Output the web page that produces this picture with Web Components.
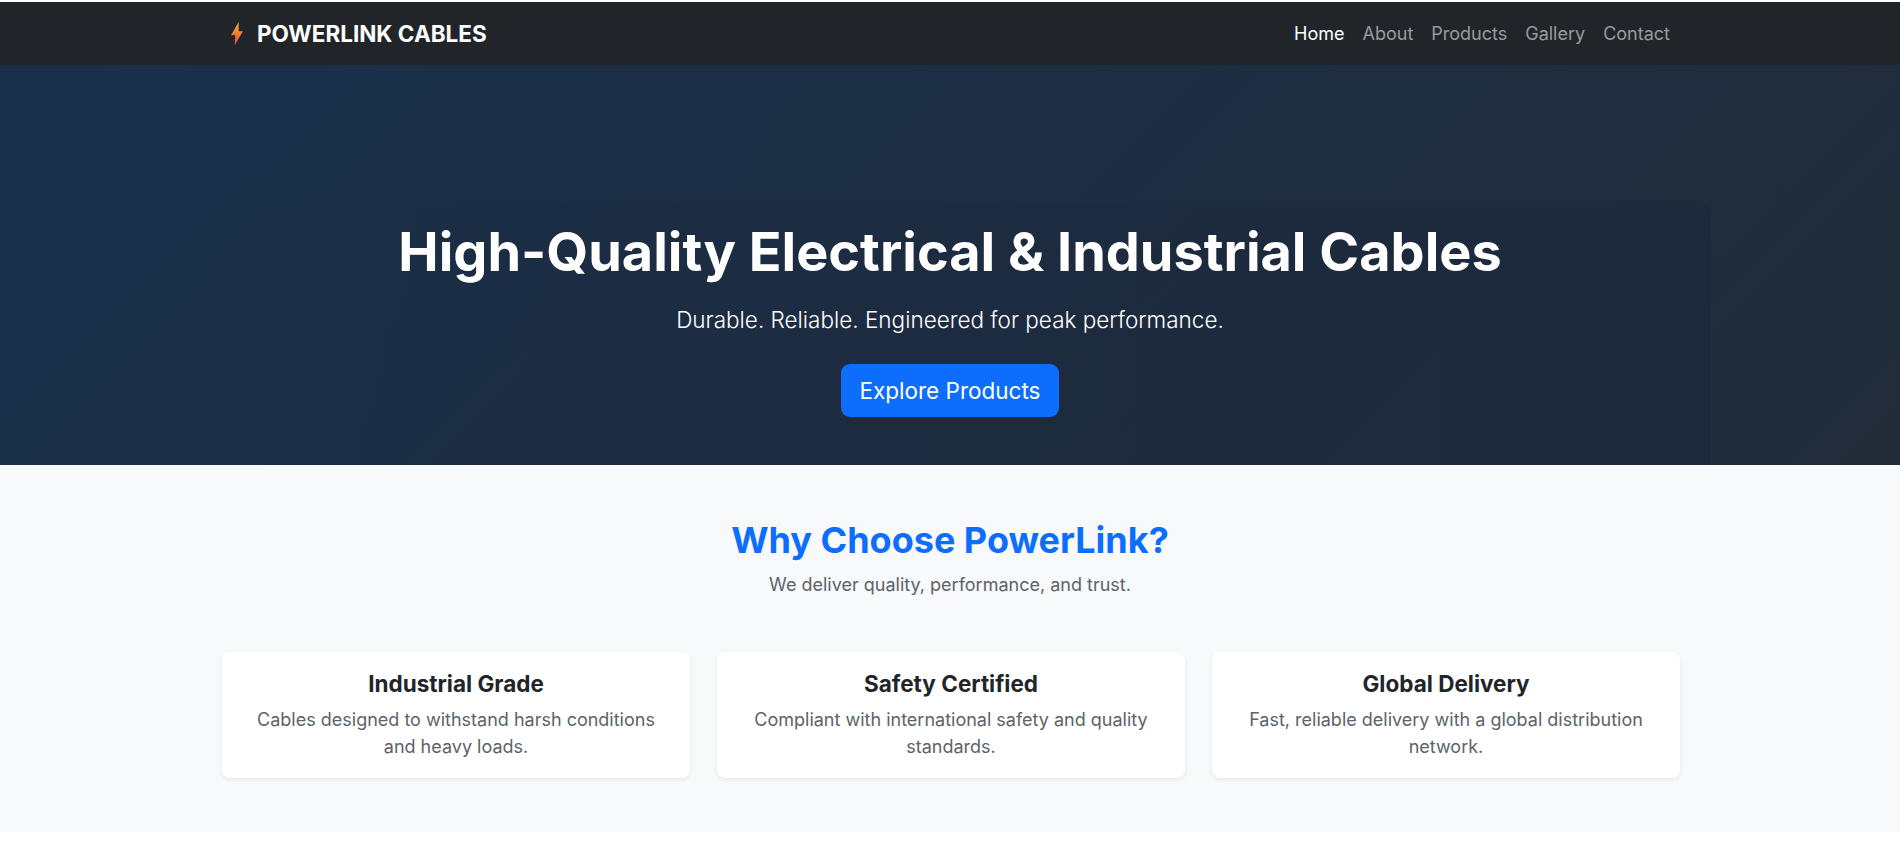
<!DOCTYPE html>
<html lang="en"><head><meta charset="utf-8"><title>PowerLink Cables</title>
<style>
html,body{margin:0;padding:0;background:#fff;font-family:Inter,"Liberation Sans",sans-serif;}
body{padding-top:2px;height:865px;overflow:hidden;}
</style></head><body>
<site-nav>
  <nav-link active>Home</nav-link><nav-link>About</nav-link><nav-link>Products</nav-link><nav-link>Gallery</nav-link><nav-link>Contact</nav-link>
</site-nav>
<hero-banner heading="High-Quality Electrical &amp; Industrial Cables" sub="Durable. Reliable. Engineered for peak performance." cta="Explore Products"></hero-banner>
<why-section heading="Why Choose PowerLink?" sub="We deliver quality, performance, and trust.">
  <feature-card heading="Industrial Grade">Cables designed to withstand harsh conditions and heavy loads.</feature-card>
  <feature-card heading="Safety Certified">Compliant with international safety and quality standards.</feature-card>
  <feature-card heading="Global Delivery">Fast, reliable delivery with a global distribution network.</feature-card>
</why-section>
<script>
function def(name,html,attrs){customElements.define(name,class extends HTMLElement{connectedCallback(){if(this.shadowRoot)return;let h=html;for(const a of attrs||[]){h=h.replace('{{'+a+'}}',(this.getAttribute(a)||'').replace(/&/g,'&amp;'));}this.attachShadow({mode:'open'}).innerHTML=h;}});}
def('site-nav',`<style>
:host{display:block;background:#212529;height:63px}
.c{height:100%;margin:0 221px 0 222px;display:flex;align-items:center;justify-content:space-between}
.b{display:flex;align-items:center;gap:13px;color:#fff;font-weight:700;font-size:22.500px;padding-left:8px}
svg{display:block}
.l{display:flex}
</style><div class="c"><div class="b"><svg width="14" height="24" viewBox="0 0 14 24"><defs><linearGradient id="g" x1="0" y1="0" x2="0" y2="1"><stop offset="0" stop-color="#ffb030"/><stop offset="1" stop-color="#e4483c"/></linearGradient></defs><path d="M8.700 0 1 13.300h4.300L4.700 23.300 13 9.300H8.700Z" fill="url(#g)"/></svg><span>POWERLINK CABLES</span></div><div class="l"><slot></slot></div></div>`);
def('nav-link',`<style>
:host{display:block;padding:0 9px;color:rgba(255,255,255,.55);font-size:18px;line-height:27px}
:host([active]){color:#fff}
</style><slot></slot>`);
def('hero-banner',`<style>
:host{display:block;height:400px;overflow:hidden;background:linear-gradient(135deg,#182f4b,#222c39);color:#fff;text-align:center;box-sizing:border-box;padding:137px 189px 0}
.box{height:300px;padding-top:18px;box-sizing:border-box;border-radius:14px;background:linear-gradient(90deg,rgba(27,38,60,0),rgba(27,38,60,.6))}
h1{margin:0 0 18px;font-size:54px;line-height:64.800px;font-weight:700}
p{margin:0 0 27px;font-size:22.500px;line-height:33.750px;font-weight:300}
a{display:block;width:fit-content;margin:0 auto;background:#0d6efd;border-radius:9px;padding:10px 19px;font-size:22.500px;line-height:33.750px}
</style><div class="box"><h1>{{heading}}</h1><p>{{sub}}</p><a>{{cta}}</a></div>`,['heading','sub','cta']);
def('why-section',`<style>
:host{display:block;background:#f8f9fa;height:367px;box-sizing:border-box;padding-top:54px;text-align:center}
h2{margin:0;color:#0d6efd;font-size:36px;line-height:43px;font-weight:700}
p{margin:9px 0 0;font-size:18px;line-height:27px;color:#5c636a}
.g{margin:54px 220px 0 222px;display:grid;grid-template-columns:repeat(3,1fr);gap:27px}
</style><h2>{{heading}}</h2><p>{{sub}}</p><div class="g"><slot></slot></div>`,['heading','sub']);
def('feature-card',`<style>
:host{display:block;background:#fff;border-radius:8px;box-shadow:0 2px 4px rgba(0,0,0,.075);padding:18px 27px;text-align:center;height:126px;box-sizing:border-box}
h3{margin:0 0 9px;color:#212529;font-size:22.500px;line-height:27px;font-weight:700}
div{color:#5c636a;font-size:18px;line-height:27px}
</style><h3>{{heading}}</h3><div><slot></slot></div>`,['heading']);
</script>
</body></html>
